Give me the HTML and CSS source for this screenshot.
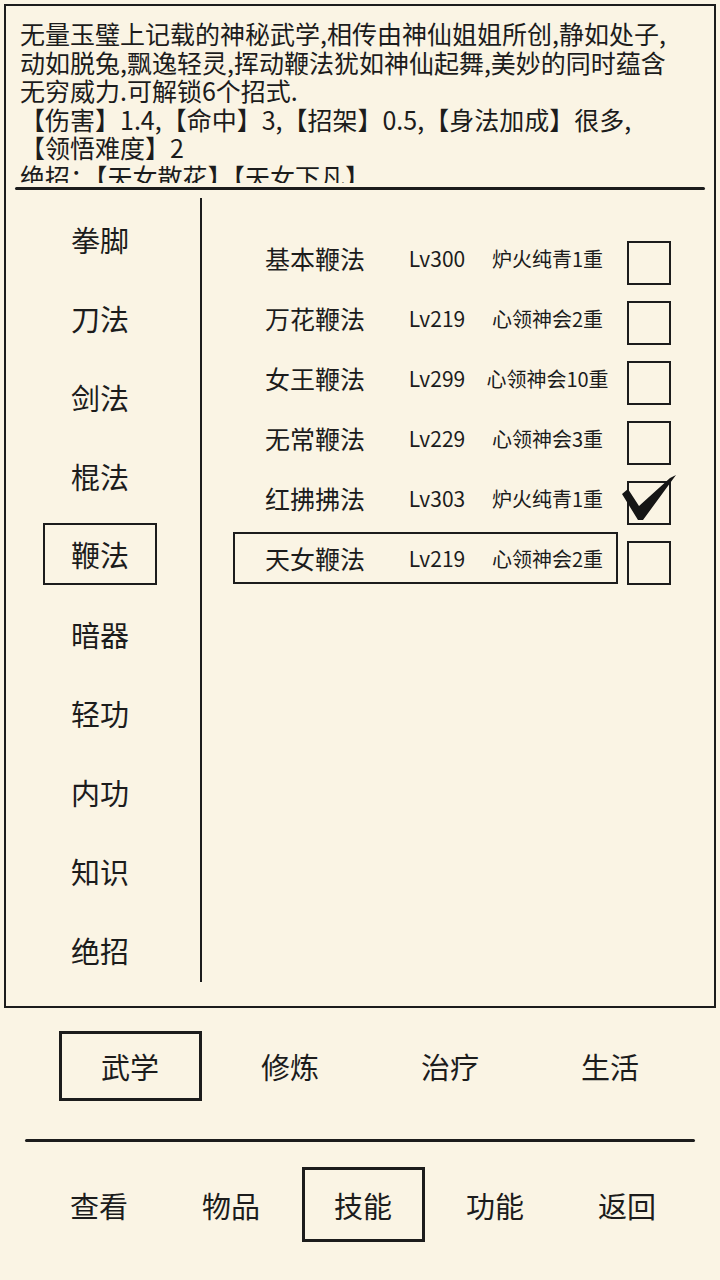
FILE: index.html
```html
<!DOCTYPE html>
<html lang="zh-CN">
<head>
    <meta charset="UTF-8">
    <meta name="viewport" content="width=device-width, initial-scale=1.0">
    <title>武学</title>
    <link rel="stylesheet" href="styles.css">
</head>
<body>
    <!-- 上方面板 -->
    <div class="frame">
        <div class="desc">
            无量玉璧上记载的神秘武学,相传由神仙姐姐所创,静如处子,<br>
            动如脱兔,飘逸轻灵,挥动鞭法犹如神仙起舞,美妙的同时蕴含<br>
            无穷威力.可解锁6个招式.<br>
            【伤害】1.4,【命中】3,【招架】0.5,【身法加成】很多,<br>
            【领悟难度】2<br>
            绝招：【天女散花】【天女下凡】
        </div>
        <div class="desc-rule"></div>

        <div class="main">
            <div class="cats">
                <div class="cat">拳脚</div>
                <div class="cat">刀法</div>
                <div class="cat">剑法</div>
                <div class="cat">棍法</div>
                <div class="cat cat-active">鞭法</div>
                <div class="cat">暗器</div>
                <div class="cat">轻功</div>
                <div class="cat">内功</div>
                <div class="cat">知识</div>
                <div class="cat">绝招</div>
            </div>
            <div class="divider"></div>

            <div class="skills">
                <div class="skill">
                    <div class="skill-info">
                        <span class="skill-name">基本鞭法</span>
                        <span class="skill-lv">Lv300</span>
                        <span class="skill-rank">炉火纯青1重</span>
                    </div>
                    <div class="check"></div>
                </div>
                <div class="skill">
                    <div class="skill-info">
                        <span class="skill-name">万花鞭法</span>
                        <span class="skill-lv">Lv219</span>
                        <span class="skill-rank">心领神会2重</span>
                    </div>
                    <div class="check"></div>
                </div>
                <div class="skill">
                    <div class="skill-info">
                        <span class="skill-name">女王鞭法</span>
                        <span class="skill-lv">Lv299</span>
                        <span class="skill-rank">心领神会10重</span>
                    </div>
                    <div class="check"></div>
                </div>
                <div class="skill">
                    <div class="skill-info">
                        <span class="skill-name">无常鞭法</span>
                        <span class="skill-lv">Lv229</span>
                        <span class="skill-rank">心领神会3重</span>
                    </div>
                    <div class="check"></div>
                </div>
                <div class="skill">
                    <div class="skill-info">
                        <span class="skill-name">红拂拂法</span>
                        <span class="skill-lv">Lv303</span>
                        <span class="skill-rank">炉火纯青1重</span>
                    </div>
                    <div class="check checked">
                        <svg class="tick" viewBox="0 0 54 46">
                            <polygon points="0,19 6,14 17,31 48,3 54,0 21,45 16,45" fill="#151515"/>
                        </svg>
                    </div>
                </div>
                <div class="skill skill-active">
                    <div class="skill-info">
                        <span class="skill-name">天女鞭法</span>
                        <span class="skill-lv">Lv219</span>
                        <span class="skill-rank">心领神会2重</span>
                    </div>
                    <div class="check"></div>
                </div>
            </div>
        </div>
    </div>

    <!-- 分类 -->
    <div class="tabs">
        <div class="tab"><span class="tab-box tab-active">武学</span></div>
        <div class="tab"><span class="tab-box">修炼</span></div>
        <div class="tab"><span class="tab-box">治疗</span></div>
        <div class="tab"><span class="tab-box">生活</span></div>
    </div>

    <div class="rule"></div>

    <!-- 底部导航 -->
    <div class="nav">
        <div class="nav-item"><span class="nav-box">查看</span></div>
        <div class="nav-item"><span class="nav-box">物品</span></div>
        <div class="nav-item"><span class="nav-box nav-active">技能</span></div>
        <div class="nav-item"><span class="nav-box">功能</span></div>
        <div class="nav-item"><span class="nav-box">返回</span></div>
    </div>
</body>
</html>
```

FILE: styles.css
```css
* {
    margin: 0;
    padding: 0;
    box-sizing: border-box;
}

body {
    background-color: #faf4e4;
    color: #1c1c1c;
    font-family: "Noto Sans CJK SC", "Noto Sans", sans-serif;
    width: 720px;
    height: 1280px;
    overflow: hidden;
}

/* 上方面板 */
.frame {
    margin: 4px 4px 0;
    height: 1004px;
    border: 2px solid #1c1c1c;
    display: flex;
    flex-direction: column;
}

.desc {
    height: 177px;
    padding: 13px 0 0 14px;
    font-size: 25px;
    line-height: 28.5px;
    overflow: hidden;
    white-space: nowrap;
}

.desc-rule {
    height: 3px;
    margin: 4px 9px 0;
    background-color: #1c1c1c;
    border-radius: 2px;
}

.main {
    flex: 1;
    display: flex;
}

/* 左侧分类 */
.cats {
    width: 194px;
    padding: 9px 6px 0 0;
}

.cat {
    height: 79px;
    display: flex;
    justify-content: center;
    align-items: center;
    font-size: 29px;
}

.cat-active {
    width: 114px;
    height: 62px;
    margin: 8px auto 9px;
    border: 2px solid #1c1c1c;
}

.divider {
    width: 2px;
    margin: 8px 0 24px;
    background-color: #1c1c1c;
}

/* 右侧列表 */
.skills {
    flex: 1;
    padding: 38px 0 0 31px;
}

.skill {
    height: 60px;
    display: flex;
    align-items: center;
}

.skill-info {
    width: 385px;
    height: 52px;
    display: grid;
    grid-template-columns: 130px 84px 1fr;
    align-items: center;
    padding-left: 30px;
    border: 2px solid transparent;
}

.skill-active .skill-info {
    border-color: #1c1c1c;
}

.skill-name {
    font-size: 25px;
}

.skill-lv {
    font-size: 21px;
    text-align: center;
}

.skill-rank {
    font-size: 20px;
    text-align: center;
}

.check {
    width: 44px;
    height: 44px;
    margin: 10px 0 0 9px;
    border: 2px solid #1c1c1c;
    position: relative;
}

.tick {
    position: absolute;
    left: -7px;
    top: -8px;
    width: 54px;
    height: 46px;
}

/* 分类标签 */
.tabs {
    display: grid;
    grid-template-columns: repeat(4, 160px);
    padding: 23px 0 0 50px;
}

.tab {
    display: flex;
    justify-content: center;
}

.tab-box {
    width: 143px;
    height: 70px;
    display: flex;
    justify-content: center;
    align-items: center;
    font-size: 29px;
    border: 3px solid transparent;
}

.tab-active {
    border-color: #1c1c1c;
}

.rule {
    height: 3px;
    margin: 38px 25px 0;
    background-color: #1c1c1c;
    border-radius: 2px;
}

/* 底部导航 */
.nav {
    display: grid;
    grid-template-columns: repeat(5, 132px);
    padding: 25px 0 0 33px;
}

.nav-item {
    display: flex;
    justify-content: center;
}

.nav-box {
    width: 123px;
    height: 75px;
    display: flex;
    justify-content: center;
    align-items: center;
    font-size: 29px;
    border: 3px solid transparent;
}

.nav-active {
    border-color: #1c1c1c;
}
```
